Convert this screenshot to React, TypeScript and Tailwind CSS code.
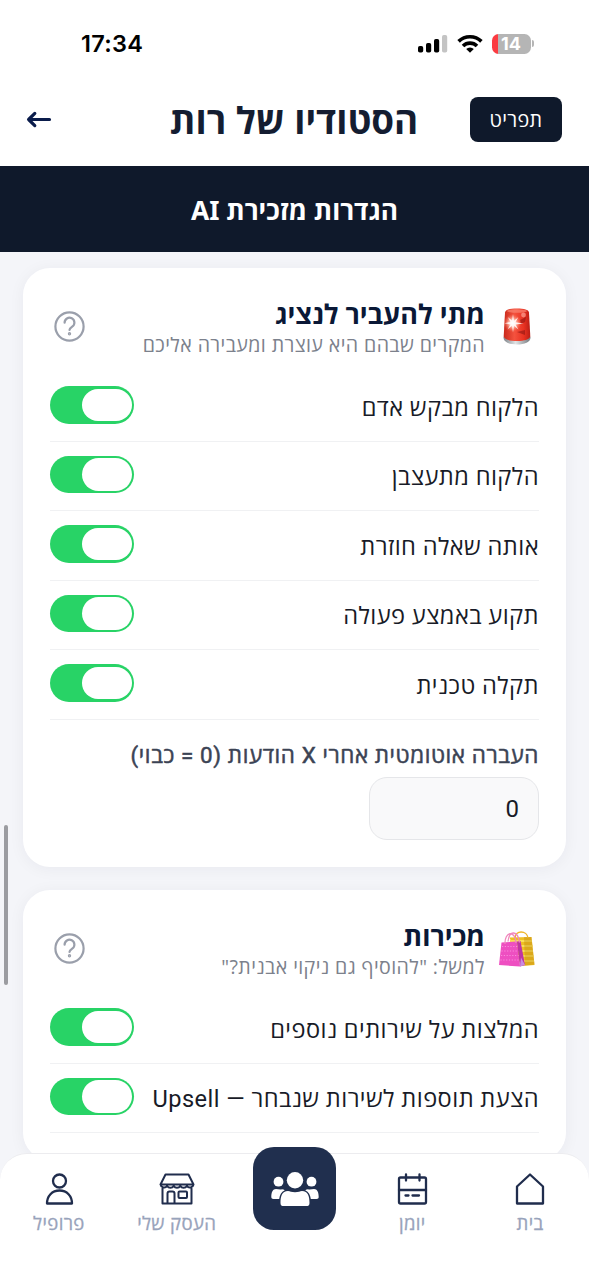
import type { ReactNode } from "react";

const HANDOFF_RULES = [
  "הלקוח מבקש אדם",
  "הלקוח מתעצבן",
  "אותה שאלה חוזרת",
  "תקוע באמצע פעולה",
  "תקלה טכנית",
];

const SALES_RULES = ["המלצות על שירותים נוספים", "הצעת תוספות לשירות שנבחר — Upsell"];

function StatusBar() {
  return (
    <div dir="ltr" className="flex h-[86px] shrink-0 items-center justify-between pr-[55px] pl-[81px]">
      <span className="pt-[2px] font-['Inter',sans-serif] text-[23.5px] font-semibold tracking-[0.3px] text-black">
        17:34
      </span>
      <div className="flex items-center pt-[1px]">
        <svg width="30" height="20" viewBox="0 0 30 20">
          <rect x="0" y="12" width="5.2" height="6.5" rx="1.8" />
          <rect x="8" y="9" width="5.2" height="9.5" rx="1.8" />
          <rect x="16" y="5" width="5.2" height="13.5" rx="1.8" />
          <rect x="24" y="1" width="5.2" height="17.5" rx="1.8" fill="#c4c4c4" />
        </svg>
        <svg className="ml-[9px]" width="26" height="20" viewBox="0 0 26 20" fill="none" stroke="#000" strokeWidth="3.6">
          <path d="M1.6 7.4a16.2 16.2 0 0 1 22.8 0" />
          <path d="M6 12a10 10 0 0 1 14 0" />
          <path d="M13 18.8l-3.8-3.7a5.4 5.4 0 0 1 7.6 0z" fill="#000" stroke="none" />
        </svg>
        <div className="ml-[9px] flex h-[20px] w-[39px] items-center justify-center overflow-hidden rounded-[6.5px] bg-[linear-gradient(90deg,#fb3b41_6px,#b5b5b5_6px)] font-['Inter',sans-serif] text-[18px] leading-none font-bold text-white">
          14
        </div>
        <span className="ml-[1px] h-[7px] w-[2.5px] rounded-r-full bg-[#b5b5b5]" />
      </div>
    </div>
  );
}

function Header() {
  return (
    <header className="grid h-[80px] shrink-0 grid-cols-[1fr_auto_1fr] items-center pr-[27px] pb-[13px] pl-[26px]">
      <button className="h-[45px] w-[92px] justify-self-start rounded-[8px] bg-[#0f192b] pt-[1px] text-[19.800px] tracking-[0.3px] text-white">
        תפריט
      </button>
      <h1 className="pt-[2px] text-[36.8px] leading-none font-bold text-[#141d31]">הסטודיו של רות</h1>
      <svg className="justify-self-end" width="26" height="18" viewBox="0 0 26 18" fill="none" stroke="#0a1c4b" strokeWidth="3.2" strokeLinecap="round" strokeLinejoin="round">
        <path d="M23.5 8.5H3M8.8 2.4L2.6 8.5l6.2 6.1" />
      </svg>
    </header>
  );
}

function Siren() {
  return (
    <svg width="36" height="40" viewBox="0 0 36 40">
      <defs>
        <linearGradient id="dome" x1="0" x2="1">
          <stop offset="0" stopColor="#c92a1c" />
          <stop offset=".4" stopColor="#f4523e" />
          <stop offset=".75" stopColor="#e93222" />
          <stop offset="1" stopColor="#b81d14" />
        </linearGradient>
        <linearGradient id="base" x1="0" x2="1">
          <stop offset="0" stopColor="#7d8388" />
          <stop offset=".45" stopColor="#e1e4e6" />
          <stop offset="1" stopColor="#74797d" />
        </linearGradient>
        <radialGradient id="glow">
          <stop offset="0" stopColor="#fff" />
          <stop offset=".45" stopColor="#ffc5b5" stopOpacity=".8" />
          <stop offset="1" stopColor="#ff6b50" stopOpacity="0" />
        </radialGradient>
      </defs>
      <path d="M4.5 30c0 5.500 6 7.500 13.500 7.500S31.500 35.500 31.500 30z" fill="url(#base)" />
      <path d="M6 5.500C6.500 2.500 11 1.500 18 1.500s11.500 1 12 4L31.300 29.500c-1 3-6 4.500-13.300 4.500S5.700 32.500 4.700 29.500z" fill="url(#dome)" />
      <ellipse cx="18" cy="4" rx="10" ry="1.800" fill="#f98472" opacity=".7" />
      <path d="M21 13l6-3-1 5-4 2zM18 25l8-2v5z" fill="#8f1512" opacity=".6" />
      <circle cx="13.500" cy="16" r="9" fill="url(#glow)" />
      <path d="M14 7l1 6.800 4.200-3.600-2.700 5 8 1.200-8 1 3 5-4.500-3.700-1 6.700-1-6.700-4.500 3.700 3-5-6-1.200 6-1.200-2.700-5 4.200 3.600z" fill="#fff" opacity=".85" />
      <circle cx="24.500" cy="8" r="2.400" fill="#ffb6a8" opacity=".6" />
    </svg>
  );
}

function ShoppingBags() {
  return (
    <svg width="38" height="40" viewBox="0 0 38 40">
      <path d="M11.500 8.500L33.500 8l3 28-13 1z" fill="#efbf22" />
      <path d="M12 12h22M13 17h21.500M20 22h15M21 27h14.500M22 32h14" stroke="#f9df55" strokeWidth="1.800" />
      <path d="M26 8l1 28.500 9.500-1L33.500 8z" fill="#b87f0d" opacity=".35" />
      <path d="M17 9c0-8 12-8 13 0" fill="none" stroke="#efb52a" strokeWidth="1.400" />
      <path d="M3.500 13.500L19 12.500l3 25L1 36z" fill="#ee4fc1" />
      <path d="M19 12.500l3.500-.5 4.500 24-5 1.500z" fill="#bf35a4" />
      <path d="M22 37.500l1-9 4 7.500z" fill="#c98be0" />
      <path d="M4 17.500h15.500M3.500 22h16.500M3 26.500h17.500M2.500 31h18.500" stroke="#f98bdc" strokeWidth="1.200" strokeDasharray="1.200 1.600" />
      <path d="M7 15c-.5-13 10.500-14 11-1M10 12.500c1-12 10-11 11.500 1" fill="none" stroke="#f088bd" strokeWidth="1.300" />
    </svg>
  );
}

function HelpIcon() {
  return (
    <svg width="31" height="31" viewBox="0 0 31 31" fill="none" stroke="#9a9fab" strokeWidth="2.2" strokeLinecap="round" strokeLinejoin="round">
      <circle cx="15.500" cy="15.500" r="14.100" />
      <path d="M10.600 11.700a4.900 4.900 0 1 1 7.600 4c-1.700 1.200-2.700 2-2.700 3.300" />
      <circle cx="15.500" cy="22.800" r=".6" fill="#9a9fab" />
    </svg>
  );
}

function Toggle() {
  return (
    <span className="flex h-[37.500px] w-[84px] shrink-0 items-center rounded-full bg-[#28d366] pr-[2.500px]">
      <span className="h-[32.500px] w-[50px] rounded-full bg-white" />
    </span>
  );
}

function Card({
  icon,
  title,
  subtitle,
  rules,
  children,
}: {
  icon: ReactNode;
  title: string;
  subtitle: string;
  rules: string[];
  children?: ReactNode;
}) {
  return (
    <section className="shrink-0 rounded-[27px] bg-white px-[27px] pt-[29px] pb-[27px] shadow-[0_2px_16px_rgba(15,25,60,0.05)]">
      <div className="flex h-[75px] items-start">
        <div className="mt-[10px] flex w-[44px] justify-center">{icon}</div>
        <div className="mr-[10px] flex-1">
          <h2 className="text-[27px] leading-[34px] font-bold whitespace-nowrap text-[#0a1836]">{title}</h2>
          <p className="text-[19.600px] leading-[28px] tracking-[0.400px] whitespace-nowrap text-[#7c818c]">{subtitle}</p>
        </div>
        <div className="mt-[14px] ml-[4px]">
          <HelpIcon />
        </div>
      </div>
      {rules.map((rule) => (
        <div key={rule} className="flex h-[69.600px] items-center justify-between border-b border-[#f0f1f3] pb-[3px]">
          <span className="pt-[7px] font-['Roboto','Open_Sans',sans-serif] text-[23.600px] tracking-[0.450px] whitespace-nowrap text-[#181b27]">
            {rule}
          </span>
          <Toggle />
        </div>
      ))}
      {children}
    </section>
  );
}

function NavItem({ label, children }: { label: string; children: ReactNode }) {
  return (
    <div className="flex flex-1 flex-col items-center pt-[18px]">
      <svg width="38" height="34" viewBox="0 0 38 34" fill="none" stroke="#202d4d" strokeWidth="2.3" strokeLinecap="round" strokeLinejoin="round">
        {children}
      </svg>
      <span className="mt-[4px] text-[18.600px] leading-[26px] tracking-[0.350px] whitespace-nowrap text-[#98a3bb] [-webkit-text-stroke:0.300px_#98a3bb]">
        {label}
      </span>
    </div>
  );
}

function BottomNav() {
  return (
    <nav className="relative flex h-[127px] shrink-0 rounded-t-[27px] border-t border-[#ececef] bg-white">
      <NavItem label="בית">
        <path d="M6 14.500L19 2.500l13 12V31.500H6z" />
      </NavItem>
      <NavItem label="יומן">
        <rect x="6" y="5.500" width="27" height="26" rx="1.500" />
        <path d="M6 18h27M13 2.500v6M26.500 2.500v6M12.500 23.500h3M19.500 23.500h6.500" />
      </NavItem>
      <div className="flex flex-1 justify-center">
        <button className="-mt-[7px] flex h-[83px] w-[83px] items-center justify-center rounded-[21px] bg-[#202f4e] pt-[2px]">
          <svg width="48" height="35" viewBox="0 0 48 35" fill="#fff">
            <circle cx="24" cy="8.300" r="8.200" />
            <circle cx="7.500" cy="9.700" r="4.900" />
            <circle cx="40.500" cy="9.700" r="4.900" />
            <path d="M9.500 31c0-7 1.500-12 7.500-12 2 0 3.500 1.300 7 1.300s5-1.300 7-1.300c6 0 7.500 5 7.500 12 0 2.500-1 3-3.500 3H13C10.500 34 9.500 33.500 9.500 31z" />
            <path d="M.3 25c0-5 1.500-8 4.700-8 2 0 4 1 6 .3 1 0 2 .3 2.800.9C10.200 20 8.700 23 8.200 27H2.500C1 27 .3 26.300.3 25z" />
            <path d="M47.700 25c0-5-1.500-8-4.700-8-2 0-4 1-6 .3-1 0-2 .3-2.800.9 3.600 1.800 5.100 4.800 5.600 8.800h5.700c1.500 0 2.200-.7 2.200-2z" />
          </svg>
        </button>
      </div>
      <NavItem label="העסק שלי">
        <path d="M7.500 2.500h23L35.500 12.500h-33zM2.500 12.500a3.700 3.700 0 0 0 6.600 1.500 4 4 0 0 0 6.600 0 4 4 0 0 0 6.600 0 4 4 0 0 0 6.600 0 3.700 3.700 0 0 0 6.600-1.500M4.500 16.500v15h29v-15M9.500 31V21.500a2 2 0 0 1 2-2h3a2 2 0 0 1 2 2V31" strokeWidth="2" />
        <rect x="20.500" y="19.500" width="8.500" height="6.500" rx="1" strokeWidth="2" />
      </NavItem>
      <NavItem label="פרופיל">
        <circle cx="19.500" cy="9" r="6.500" />
        <path d="M7 31.500c0-7.500 5-13 12.500-13S32 24 32 31.500z" />
      </NavItem>
    </nav>
  );
}

export default function App() {
  return (
    <div dir="rtl" className="relative flex h-[1280px] w-[589px] flex-col overflow-hidden bg-[#f4f5f9] font-['Open_Sans','Noto_Sans',sans-serif]">
      <div className="flex shrink-0 flex-col bg-white">
        <StatusBar />
        <Header />
      </div>
      <div className="flex h-[86px] shrink-0 items-center justify-center bg-[#0f192b] pt-[3px] text-[26.300px] font-bold text-white">
        <span>
          הגדרות מזכירת <span className="font-['Noto_Sans',sans-serif]">AI</span>
        </span>
      </div>
      <main className="flex min-h-0 flex-1 flex-col gap-[23px] overflow-hidden px-[23px] pt-[16px]">
        <Card icon={<Siren />} title="מתי להעביר לנציג" subtitle="המקרים שבהם היא עוצרת ומעבירה אליכם" rules={HANDOFF_RULES}>
          <p className="mt-[20px] font-['Roboto','Open_Sans',sans-serif] text-[22.400px] leading-[30px] tracking-[0.600px] whitespace-nowrap text-[#3b4354] [-webkit-text-stroke:0.500px_#3b4354]">
            העברה אוטומטית אחרי X הודעות (0 = כבוי)
          </p>
          <div className="mt-[7px] flex h-[63px] w-[170px] items-center rounded-[18px] border-[1.500px] border-[#e5e6e9] bg-[#f9f9fa] px-[19px] pt-[2px] font-['Roboto',sans-serif] text-[24px] text-[#181b27]">
            0
          </div>
        </Card>
        <Card icon={<ShoppingBags />} title="מכירות" subtitle={'למשל: "להוסיף גם ניקוי אבנית?"'} rules={SALES_RULES} />
      </main>
      <BottomNav />
      <span className="absolute top-[825px] left-[4px] h-[160px] w-[4px] rounded-full bg-[#9b9ca1]" />
    </div>
  );
}
